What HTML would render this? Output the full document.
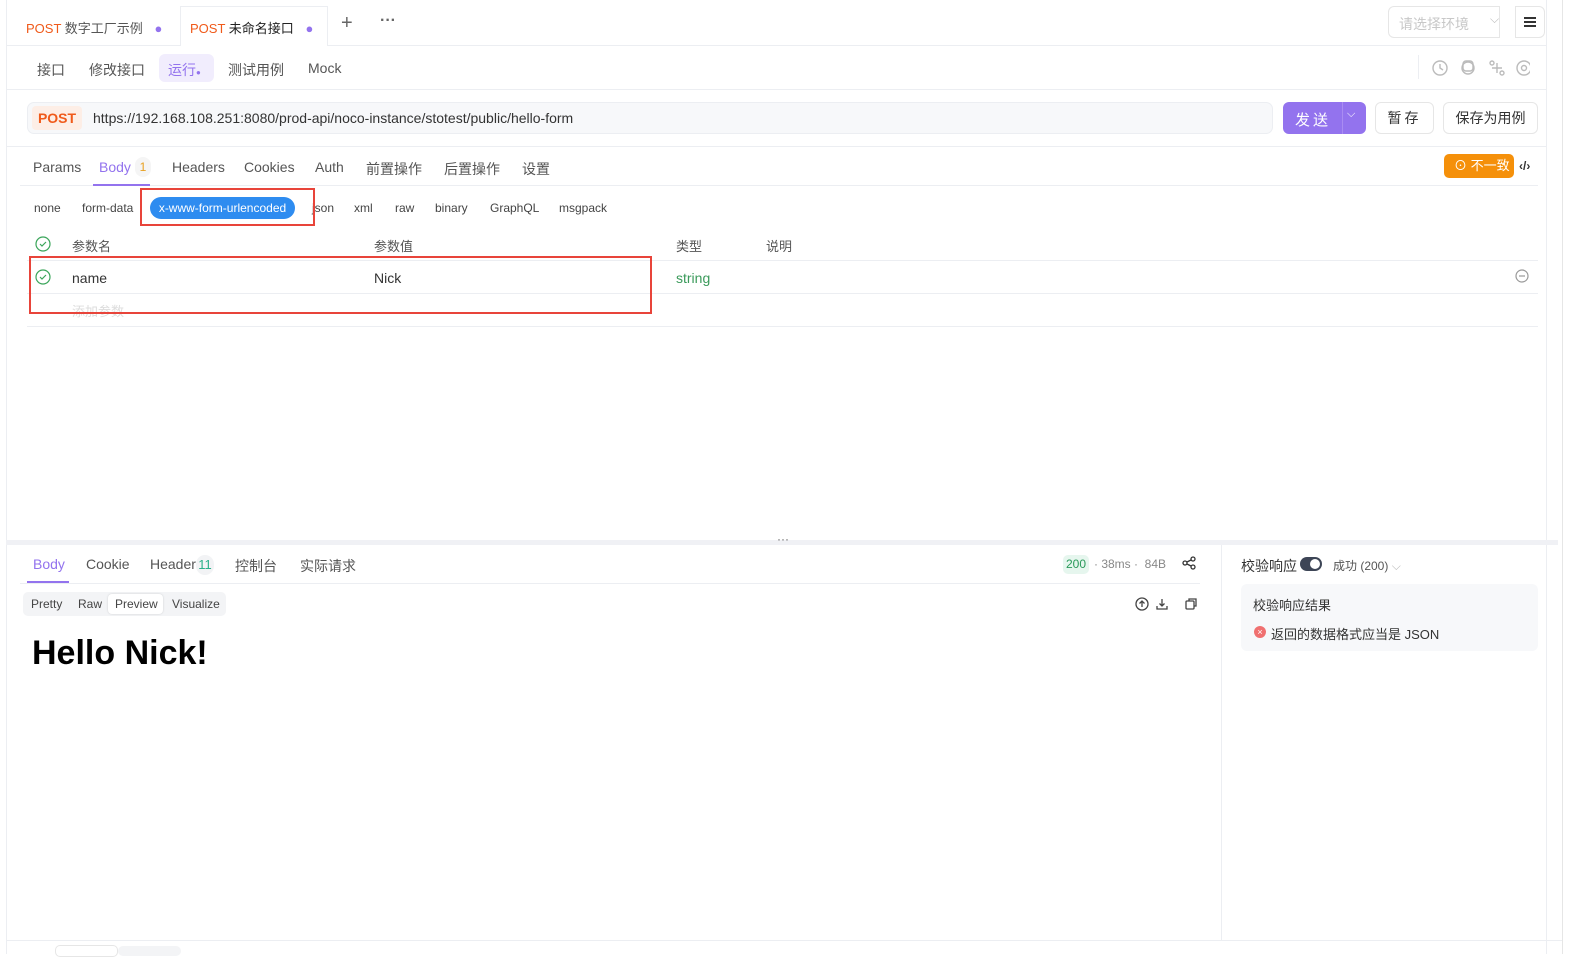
<!DOCTYPE html>
<html><head><meta charset="utf-8"><style>
*{box-sizing:border-box;margin:0;padding:0}
body{width:1574px;height:954px;background:#fff;font-family:"Liberation Sans","Noto Sans CJK SC",sans-serif;font-size:14px;color:#333;position:relative;overflow:hidden}
.a{position:absolute;white-space:nowrap}
.hl{position:absolute;height:1px;background:#eceef2}
.vl{position:absolute;width:1px;background:#eceef2}
.g{color:#555}
</style></head><body>
<div class="vl" style="left:6px;top:0;height:954px"></div>
<div class="vl" style="left:1546px;top:0;height:954px"></div>
<div class="a" style="left:1547px;top:0;width:27px;height:954px;background:#fff"></div>
<div class="vl" style="left:1562px;top:0;height:954px;background:#e6e6e6"></div>
<!-- tab bar -->
<div class="hl" style="left:6px;top:45px;width:1540px"></div>
<div class="a" style="left:26px;top:18px;font-size:13px"><span style="color:#f05a1a">POST</span> <span class="g">数字工厂示例</span> <span style="color:#9373ee;margin-left:8px">●</span></div>
<div class="a" style="left:180px;top:6px;width:148px;height:40px;border:1px solid #eceef2;border-bottom:none;background:#fff"></div>
<div class="a" style="left:190px;top:18px;font-size:13px"><span style="color:#f05a1a">POST</span> <span style="color:#222">未命名接口</span> <span style="color:#9373ee;margin-left:8px">●</span></div>
<div class="a" style="left:341px;top:12px;font-size:20px;color:#666">+</div>
<div class="a" style="left:380px;top:12px;font-size:16px;color:#666;font-weight:bold">···</div>
<div class="a" style="left:1388px;top:6px;width:112px;height:32px;border:1px solid #e6e6e6;border-radius:6px 0 0 6px"></div>
<div class="a" style="left:1399px;top:14px;color:#c8c8c8">请选择环境</div>
<div class="a" style="left:1490px;top:12px;color:#bbb;font-size:12px">⌵</div>
<div class="a" style="left:1515px;top:6px;width:30px;height:32px;border:1px solid #e6e6e6;border-radius:0 6px 6px 0"></div>
<div class="a" style="left:1524px;top:17px;width:12px;height:2px;background:#333;box-shadow:0 4px 0 #333,0 8px 0 #333"></div>
<!-- subnav -->
<div class="a g" style="left:37px;top:60px">接口</div>
<div class="a g" style="left:89px;top:60px">修改接口</div>
<div class="a" style="left:159px;top:54px;width:55px;height:28px;background:#f1edfd;border-radius:6px"></div>
<div class="a" style="left:168px;top:60px;color:#9373ee">运行<span style="font-size:8px">●</span></div>
<div class="a g" style="left:228px;top:60px">测试用例</div>
<div class="a g" style="left:308px;top:60px">Mock</div>
<div class="vl" style="left:1418px;top:55px;height:24px"></div>
<svg class="a" style="left:1430px;top:58px" width="100" height="20" fill="none" stroke="#bbb" stroke-width="1.4"><circle cx="10" cy="10" r="7"/><path d="M10 6v4l3 2"/><circle cx="38" cy="10" r="6"/><rect x="33" y="3" width="10" height="10" rx="3"/><circle cx="62" cy="5" r="2"/><circle cx="72" cy="15" r="2"/><path d="M62 10h10M67 5v10"/><circle cx="94" cy="10" r="7"/><circle cx="94" cy="10" r="2.5"/></svg>
<div class="hl" style="left:6px;top:89px;width:1540px"></div>
<!-- URL -->
<div class="a" style="left:27px;top:102px;width:1246px;height:32px;background:#f7f8fa;border:1px solid #eceef2;border-radius:7px"></div>
<div class="a" style="left:32px;top:106px;width:50px;height:24px;background:#fdeee6;border-radius:4px;color:#f05a1a;font-weight:bold;text-align:center;line-height:24px">POST</div>
<div class="a" style="left:93px;top:110px;color:#333">https://192.168.108.251:8080/prod-api/noco-instance/stotest/public/hello-form</div>
<div class="a" style="left:1283px;top:102px;width:83px;height:32px;background:#9373ee;border-radius:6px"></div>
<div class="vl" style="left:1342px;top:102px;height:32px;background:#a98cf2"></div>
<div class="a" style="left:1295px;top:109px;color:#fff;font-size:15px;letter-spacing:3px">发送</div>
<div class="a" style="left:1347px;top:108px;color:#fff;font-size:11px">⌵</div>
<div class="a" style="left:1375px;top:102px;width:59px;height:32px;border:1px solid #e6e6e6;border-radius:6px;text-align:center;line-height:30px;letter-spacing:3px;color:#333">暂存</div>
<div class="a" style="left:1443px;top:102px;width:95px;height:32px;border:1px solid #e6e6e6;border-radius:6px;text-align:center;line-height:30px;color:#333">保存为用例</div>
<div class="hl" style="left:6px;top:146px;width:1540px"></div>
<!-- req tabs -->
<div class="a g" style="left:33px;top:159px">Params</div>
<div class="a" style="left:99px;top:159px;color:#9373ee">Body</div>
<div class="a" style="left:135px;top:157px;width:16px;height:20px;background:#f5f5f5;border-radius:8px;color:#e8a020;font-size:12px;text-align:center;line-height:20px">1</div>
<div class="a g" style="left:172px;top:159px">Headers</div>
<div class="a g" style="left:244px;top:159px">Cookies</div>
<div class="a g" style="left:315px;top:159px">Auth</div>
<div class="a g" style="left:366px;top:159px">前置操作</div>
<div class="a g" style="left:444px;top:159px">后置操作</div>
<div class="a g" style="left:522px;top:159px">设置</div>
<div class="a" style="left:1444px;top:154px;width:70px;height:24px;background:#f5900a;border-radius:5px;color:#fff;font-size:13px;line-height:24px;padding-left:10px">⊙ 不一致</div>
<div class="a" style="left:1519px;top:159px;font-size:12px;font-weight:bold;color:#333">‹/›</div>
<div class="hl" style="left:20px;top:185px;width:1518px"></div>
<div class="a" style="left:93px;top:184px;width:57px;height:2px;background:#9373ee"></div>
<!-- body types -->
<div class="a" style="left:34px;top:201px;font-size:12px;color:#444">none</div>
<div class="a" style="left:82px;top:201px;font-size:12px;color:#444">form-data</div>
<div class="a" style="left:150px;top:197px;width:145px;height:22px;background:#2e8cf0;border-radius:11px;color:#fff;font-size:12px;line-height:22px;text-align:center">x-www-form-urlencoded</div>
<div class="a" style="left:312px;top:201px;font-size:12px;color:#444">json</div>
<div class="a" style="left:354px;top:201px;font-size:12px;color:#444">xml</div>
<div class="a" style="left:395px;top:201px;font-size:12px;color:#444">raw</div>
<div class="a" style="left:435px;top:201px;font-size:12px;color:#444">binary</div>
<div class="a" style="left:490px;top:201px;font-size:12px;color:#444">GraphQL</div>
<div class="a" style="left:559px;top:201px;font-size:12px;color:#444">msgpack</div>
<div class="a" style="left:140px;top:188px;width:175px;height:38px;border:2px solid #e8443a"></div>
<!-- table -->
<svg class="a" style="left:35px;top:236px" width="16" height="16"><circle cx="8" cy="8" r="7" fill="none" stroke="#3aa55a" stroke-width="1.2"/><path d="M5 8l2 2 4-4" fill="none" stroke="#3aa55a" stroke-width="1.2"/></svg>
<div class="a" style="left:72px;top:236px;font-size:13px;color:#555">参数名</div>
<div class="a" style="left:374px;top:236px;font-size:13px;color:#555">参数值</div>
<div class="a" style="left:676px;top:236px;font-size:13px;color:#555">类型</div>
<div class="a" style="left:766px;top:236px;font-size:13px;color:#555">说明</div>
<div class="hl" style="left:27px;top:260px;width:1511px"></div>
<svg class="a" style="left:35px;top:269px" width="16" height="16"><circle cx="8" cy="8" r="7" fill="none" stroke="#3aa55a" stroke-width="1.2"/><path d="M5 8l2 2 4-4" fill="none" stroke="#3aa55a" stroke-width="1.2"/></svg>
<div class="a" style="left:72px;top:270px;color:#333">name</div>
<div class="a" style="left:374px;top:270px;color:#333">Nick</div>
<div class="a" style="left:676px;top:270px;color:#3a9a5a">string</div>
<svg class="a" style="left:1515px;top:269px" width="14" height="14"><circle cx="7" cy="7" r="6" fill="none" stroke="#999" stroke-width="1.2"/><path d="M4 7h6" stroke="#999" stroke-width="1.2"/></svg>
<div class="hl" style="left:27px;top:293px;width:1511px"></div>
<div class="a" style="left:72px;top:301px;color:#ddd;font-size:13px">添加参数</div>
<div class="hl" style="left:27px;top:326px;width:1511px"></div>
<div class="a" style="left:29px;top:256px;width:623px;height:58px;border:2px solid #e8443a"></div>
<!-- divider -->
<div class="a" style="left:6px;top:540px;width:1552px;height:5px;background:#f0f1f5"></div>
<div class="a" style="left:777px;top:532px;font-size:12px;color:#666">···</div>
<!-- response tabs -->
<div class="a" style="left:33px;top:556px;color:#9373ee">Body</div>
<div class="a g" style="left:86px;top:556px">Cookie</div>
<div class="a g" style="left:150px;top:556px">Header</div>
<div class="a" style="left:196px;top:555px;width:18px;height:20px;background:#f2f3f5;border-radius:9px;color:#2bb08a;font-size:13px;text-align:center;line-height:20px">11</div>
<div class="a g" style="left:235px;top:556px">控制台</div>
<div class="a g" style="left:300px;top:556px">实际请求</div>
<div class="a" style="left:1063px;top:555px;width:26px;height:19px;background:#e6f6ee;border-radius:5px;color:#2a9a5a;font-size:12px;text-align:center;line-height:19px">200</div>
<div class="a" style="left:1094px;top:557px;font-size:12px;color:#888">· 38ms · &nbsp;84B</div>
<svg class="a" style="left:1182px;top:556px" width="14" height="14" fill="none" stroke="#333" stroke-width="1.3"><circle cx="11" cy="3" r="2"/><circle cx="3" cy="7" r="2"/><circle cx="11" cy="11" r="2"/><path d="M5 6l4-2M5 8l4 2"/></svg>
<div class="hl" style="left:20px;top:583px;width:1180px"></div>
<div class="a" style="left:27px;top:581px;width:42px;height:2px;background:#9373ee"></div>
<div class="a" style="left:23px;top:592px;width:203px;height:24px;background:#f3f4f6;border-radius:5px"></div>
<div class="a" style="left:108px;top:594px;width:55px;height:20px;background:#fff;border-radius:4px;box-shadow:0 0 2px rgba(0,0,0,.15)"></div>
<div class="a" style="left:31px;top:597px;font-size:12px;color:#444">Pretty</div>
<div class="a" style="left:78px;top:597px;font-size:12px;color:#444">Raw</div>
<div class="a" style="left:115px;top:597px;font-size:12px;color:#444">Preview</div>
<div class="a" style="left:172px;top:597px;font-size:12px;color:#444">Visualize</div>
<svg class="a" style="left:1134px;top:596px" width="70" height="16" fill="none" stroke="#444" stroke-width="1.3"><circle cx="8" cy="8" r="6"/><path d="M8 11V5M5.5 7.5L8 5l2.5 2.5"/><path d="M28 3v7M25.5 7.5L28 10l2.5-2.5M23 10v3h10v-3"/><rect x="52" y="5" width="8" height="8" rx="1"/><path d="M55 5V3h7v7h-2"/></svg>
<div class="a" style="left:32px;top:634px;font-size:34px;font-weight:bold;color:#000">Hello Nick!</div>
<!-- right panel -->
<div class="vl" style="left:1221px;top:545px;height:395px"></div>
<div class="a" style="left:1241px;top:556px;color:#333">校验响应</div>
<div class="a" style="left:1300px;top:557px;width:22px;height:14px;background:#3d4556;border-radius:7px"></div>
<div class="a" style="left:1310px;top:559px;width:10px;height:10px;background:#fff;border-radius:5px"></div>
<div class="a" style="left:1333px;top:557px;font-size:12px;color:#555">成功 (200) <span style="color:#bbb">⌵</span></div>
<div class="a" style="left:1241px;top:584px;width:297px;height:67px;background:#f7f8fa;border-radius:6px"></div>
<div class="a" style="left:1253px;top:595px;font-size:13px;color:#333">校验响应结果</div>
<div class="a" style="left:1254px;top:626px;width:12px;height:12px;border-radius:6px;background:#f07070;color:#fff;font-size:9px;line-height:12px;text-align:center">×</div>
<div class="a" style="left:1271px;top:624px;font-size:13px;color:#333">返回的数据格式应当是 JSON</div>
<div class="hl" style="left:6px;top:940px;width:1556px"></div>
<div class="a" style="left:55px;top:945px;width:63px;height:12px;border:1px solid #e6e6e6;border-radius:5px"></div>
<div class="a" style="left:118px;top:946px;width:63px;height:10px;background:#f3f4f6;border-radius:5px"></div>
</body></html>
